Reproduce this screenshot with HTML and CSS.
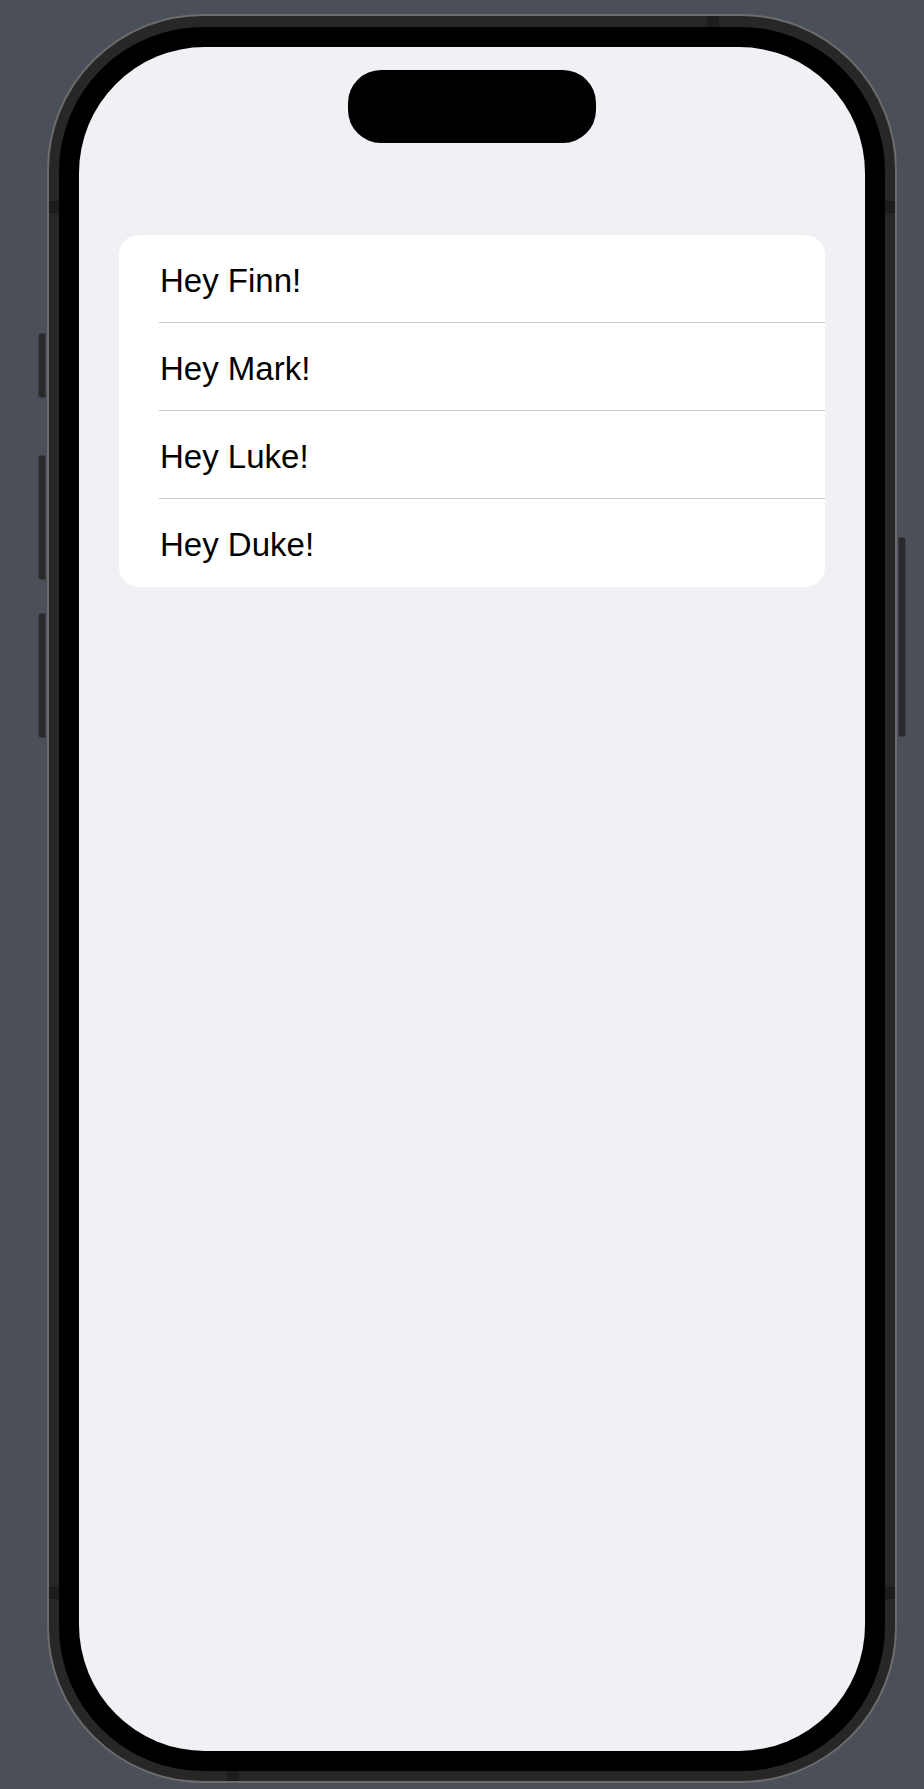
FILE: index.html
```html
<!DOCTYPE html>
<html lang="en">
<head>
<meta charset="utf-8">
<title>List</title>
<link rel="stylesheet" href="styles.css">
</head>
<body>
<div class="stage">
  <div class="phone">
    <span class="btn btn-l1"></span>
    <span class="btn btn-l2"></span>
    <span class="btn btn-l3"></span>
    <span class="btn btn-r1"></span>
    <span class="band band-lt"></span>
    <span class="band band-rt"></span>
    <span class="band band-lb"></span>
    <span class="band band-rb"></span>
    <span class="notchline notch-top"></span>
    <span class="notchline notch-bottom"></span>
    <div class="bezel">
      <div class="screen">
        <div class="island"></div>
        <ul class="list">
          <li class="row">Hey Finn!</li>
          <li class="row">Hey Mark!</li>
          <li class="row">Hey Luke!</li>
          <li class="row">Hey Duke!</li>
        </ul>
      </div>
    </div>
  </div>
</div>
</body>
</html>
```

FILE: styles.css
```css
html, body {
  margin: 0;
  padding: 0;
  background: #4b5058;
}

.stage {
  width: 924px;
  height: 1789px;
  padding: 14px 0 0 47px;
  box-sizing: border-box;
}

.phone {
  position: relative;
  width: 850px;
  height: 1769px;
  box-sizing: border-box;
  border: 2px solid #6c6c6e;
  border-radius: 156px;
  background: #272727;
  padding: 11px 10px 10px 10px;
}

.bezel {
  height: 100%;
  box-sizing: border-box;
  background: #000;
  border-radius: 144px;
  padding: 20px;
}

.screen {
  height: 100%;
  box-sizing: border-box;
  background: #f0f0f5;
  border-radius: 126px;
  padding-top: 23px;
  overflow: hidden;
}

.island {
  width: 248px;
  height: 73px;
  margin: 0 auto;
  background: #000;
  border-radius: 33px;
}

.list {
  list-style: none;
  margin: 92px 40px 0 40px;
  padding: 0;
  background: #fff;
  border-radius: 20px;
  overflow: hidden;
}

.row {
  height: 88px;
  box-sizing: border-box;
  margin-left: 40px;
  padding: 4px 0 0 1px;
  display: flex;
  align-items: center;
  border-bottom: 1px solid #c8c8cc;
  font-family: "Liberation Sans", Arial, sans-serif;
  font-size: 33px;
  color: #000;
}

.row:last-child {
  border-bottom: none;
}

/* side buttons */
.btn {
  position: absolute;
  width: 8px;
  background: #2a2a2b;
  border: 1px solid #3b3f45;
  box-sizing: border-box;
}
.btn-l1 { left: -11px; top: 317px; height: 65px; border-radius: 3px 0 0 3px; }
.btn-l2 { left: -11px; top: 439px; height: 125px; border-radius: 3px 0 0 3px; }
.btn-l3 { left: -11px; top: 597px; height: 125px; border-radius: 3px 0 0 3px; }
.btn-r1 { right: -11px; top: 521px; height: 200px; border-radius: 0 3px 3px 0; }

/* antenna bands on the frame */
.band {
  position: absolute;
  width: 10px;
  height: 12px;
  background: #1c1c1c;
}
.band-lt { left: 0; top: 185px; }
.band-rt { right: 0; top: 185px; }
.band-lb { left: 0; top: 1571px; }
.band-rb { right: 0; top: 1571px; }

.notchline {
  position: absolute;
  width: 12px;
  background: #1c1c1c;
}
.notch-top { left: 658px; top: 0; height: 11px; }
.notch-bottom { left: 178px; bottom: 0; height: 10px; }
```
